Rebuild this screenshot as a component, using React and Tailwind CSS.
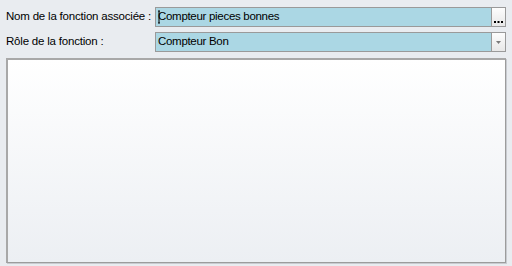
import React from 'react'

const App = () => {
    return (
        <div className="w-[512px] h-[266px] bg-[#e9ecf0] flex flex-col px-[6px] pt-[7px] pb-[3px] text-black" style={{ fontFamily: '"Liberation Sans", Arial, sans-serif' }}>
            <div className="flex items-center h-[20px]">
                <div className="w-[149px] text-[11.5px] tracking-[-0.2px]">Nom de la fonction associée :</div>
                <div className="flex-1 h-[20px] flex border border-[#9a9a9a] bg-[#abd7e4]">
                    <div className="relative flex-1 flex items-center pl-[2px] text-[11.5px] tracking-[-0.3px]">
                        <svg className="absolute left-[1px] top-[2px]" width="6" height="14" viewBox="0 0 6 14">
                            <path d="M1 1h2M2 1v12M1 13h2" stroke="#000" strokeWidth="1" fill="none" />
                        </svg>
                        Compteur pieces bonnes
                    </div>
                    <div className="w-[14px] border-l border-[#9a9a9a] bg-gradient-to-b from-[#fdfdfd] to-[#e8e8e8] flex items-end justify-center pb-[3px]">
                        <svg width="9" height="2" viewBox="0 0 9 2">
                            <rect x="0" y="0" width="2" height="2" fill="#000" />
                            <rect x="3.5" y="0" width="2" height="2" fill="#000" />
                            <rect x="7" y="0" width="2" height="2" fill="#000" />
                        </svg>
                    </div>
                </div>
            </div>
            <div className="flex items-center h-[20px] mt-[5px]">
                <div className="w-[149px] text-[11.5px] tracking-[-0.2px]">Rôle de la fonction :</div>
                <div className="flex-1 h-[20px] flex border border-[#9a9a9a] bg-[#abd7e4]">
                    <div className="flex-1 flex items-center pl-[2px] text-[11.5px] tracking-[-0.3px]">Compteur Bon</div>
                    <div className="w-[14px] border-l border-[#9a9a9a] bg-gradient-to-b from-[#fdfdfd] to-[#e8e8e8] flex items-center justify-center">
                        <svg width="5" height="3" viewBox="0 0 5 3">
                            <path d="M0 0h5L2.5 3z" fill="#7a7a7a" />
                        </svg>
                    </div>
                </div>
            </div>
            <div className="flex-1 mt-[6px] border border-[#9c9c9c] border-l-2 border-t-2 border-l-[#a8a8a8] border-t-[#a8a8a8] bg-gradient-to-b from-white to-[#eceff3] shadow-[1px_1px_0_#c8cbd0]"></div>
        </div>
    )
}

export default App
